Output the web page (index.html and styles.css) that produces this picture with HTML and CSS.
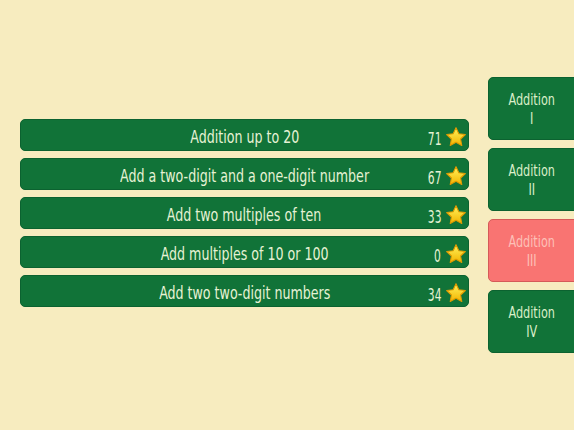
FILE: index.html
```html
<!DOCTYPE html>
<html>
<head>
<meta charset="utf-8">
<link rel="stylesheet" href="styles.css">
</head>
<body>
<svg width="0" height="0" class="defs">
  <defs>
    <linearGradient id="sg" x1="0" y1="0" x2="0" y2="1">
      <stop offset="0" stop-color="#fff35c"/>
      <stop offset="1" stop-color="#f2b400"/>
    </linearGradient>
    <symbol id="star" viewBox="0 0 24 24">
      <path d="M12 1.8l3.1 6.6 7.1.9-5.2 4.9 1.3 7.1L12 17.8l-6.3 3.5 1.3-7.1-5.2-4.9 7.1-.9z" fill="url(#sg)" stroke="#e09a00" stroke-width="1.2" stroke-linejoin="round"/>
    </symbol>
  </defs>
</svg>
<main class="page">
  <section class="lessons">
    <div class="row"><span class="title">Addition up to 20</span><span class="score"><span class="num">71</span><svg class="star"><use href="#star"/></svg></span></div>
    <div class="row"><span class="title">Add a two-digit and a one-digit number</span><span class="score"><span class="num">67</span><svg class="star"><use href="#star"/></svg></span></div>
    <div class="row"><span class="title">Add two multiples of ten</span><span class="score"><span class="num">33</span><svg class="star"><use href="#star"/></svg></span></div>
    <div class="row"><span class="title">Add multiples of 10 or 100</span><span class="score"><span class="num">0</span><svg class="star"><use href="#star"/></svg></span></div>
    <div class="row"><span class="title">Add two two-digit numbers</span><span class="score"><span class="num">34</span><svg class="star"><use href="#star"/></svg></span></div>
  </section>
  <nav class="tabs">
    <div class="tab"><span class="tab-label">Addition<br>I</span></div>
    <div class="tab"><span class="tab-label">Addition<br>II</span></div>
    <div class="tab active"><span class="tab-label">Addition<br>III</span></div>
    <div class="tab"><span class="tab-label">Addition<br>IV</span></div>
  </nav>
</main>
</body>
</html>
```
FILE: styles.css
```css
html, body {
  margin: 0;
  padding: 0;
  background: #f7ecbf;
  overflow: hidden;
}
.defs { position: absolute; }
.page {
  width: 574px;
  height: 430px;
  display: flex;
  align-items: center;
  padding-left: 20px;
  box-sizing: border-box;
  gap: 19px;
  font-family: "DejaVu Sans Condensed", "DejaVu Sans", sans-serif;
  font-stretch: condensed;
}
.lessons {
  width: 449px;
  display: flex;
  flex-direction: column;
  gap: 7px;
  flex: none;
  margin-bottom: 4px;
}
.row {
  height: 32px;
  box-sizing: border-box;
  background: #117338;
  border: 1px solid #0c6230;
  border-radius: 5px;
  display: grid;
  align-items: center;
  color: #e6f2d4;
  font-size: 18px;
}
.title {
  grid-area: 1 / 1;
  justify-self: center;
  white-space: nowrap;
  transform: scaleX(0.78);
  padding-top: 2px;
}
.score {
  grid-area: 1 / 1;
  justify-self: end;
  display: flex;
  align-items: center;
  padding-right: 1px;
  padding-top: 5px;
}
.num {
  display: inline-block;
  font-size: 17px;
  transform: scaleX(0.7);
  transform-origin: right center;
  margin-right: 4px;
  padding-top: 2px;
}
.star {
  width: 22px;
  height: 22px;
  margin-top: -1px;
}
.tabs {
  display: flex;
  flex-direction: column;
  gap: 8.5px;
  flex: none;
}
.tab {
  width: 100px;
  height: 62.5px;
  box-sizing: border-box;
  background: #117338;
  border: 1px solid #0c6230;
  border-radius: 5px;
  color: #dbefc9;
  font-size: 16px;
  line-height: 19px;
  display: flex;
  align-items: center;
  justify-content: center;
  padding-right: 13px;
  text-align: center;
}
.tab-label {
  display: inline-block;
  white-space: nowrap;
  transform: scaleX(0.78);
}
.tab.active {
  background: #f97472;
  border-color: #d55a58;
  color: #fdc0b8;
}
```
